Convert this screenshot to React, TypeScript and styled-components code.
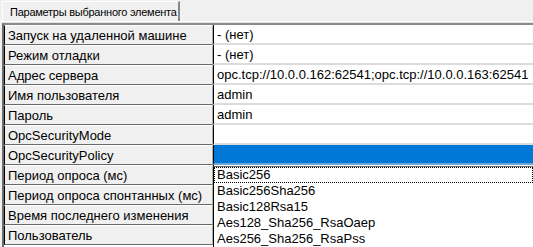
import React from "react";
import styled, { createGlobalStyle } from "styled-components";

const Global = createGlobalStyle`
  html, body { margin: 0; padding: 0; background: #f0f0f0; overflow: hidden; }
  body { font-family: "Liberation Sans", Arial, sans-serif; }
`;

const Page = styled.div`
  width: 533px;
  height: 247px;
  display: flex;
  flex-direction: column;
  position: relative;
  overflow: hidden;
  background: #f0f0f0;
`;

const TabStrip = styled.div`
  height: 22px;
  display: flex;
  align-items: flex-end;
  padding-left: 2px;
  border-bottom: 1px solid #ffffff;
  box-sizing: border-box;
`;

const Tab = styled.div`
  height: 20px;
  width: 178px;
  box-sizing: border-box;
  border-top: 1px solid #ffffff;
  border-left: 1px solid #ffffff;
  border-right: 2px solid #8a8a8a;
  display: flex;
  align-items: center;
  padding-left: 7px;
  font-size: 11px;
  color: #000;
  letter-spacing: -0.25px;
  white-space: nowrap;
  overflow: hidden;
`;

const Panel = styled.div`
  flex: 1;
  display: flex;
  flex-direction: column;
  border-top: 1px solid #e3e3e3;
  margin-left: 2px;
`;

const Grid = styled.div`
  flex: 1;
  display: grid;
  grid-template-columns: 209px 1fr;
  grid-auto-rows: 20px;
  border-top: 2px solid #8a8a8a;
  border-left: 2px solid #6b6b6b;
  background: #ffffff;
  align-content: start;
`;

const Label = styled.div`
  box-sizing: border-box;
  background: #f0f0f0;
  border-left: 1px solid #000;
  border-top: 1px solid #ffffff;
  border-bottom: 1px solid #696969;
  border-right: 1px solid #b0b0b0;
  display: flex;
  align-items: center;
  padding: 1px 0 0 3px;
  font-size: 13px;
  color: #000;
  white-space: nowrap;
  overflow: hidden;
`;

const Value = styled.div<{ $selected?: boolean }>`
  box-sizing: border-box;
  background: ${(p) => (p.$selected ? "#0078d7" : "#ffffff")};
  border-left: 1px solid #000;
  border-bottom: 2px solid ${(p) => (p.$selected ? "#6aa5d8" : "#dcdcdc")};
  display: flex;
  align-items: center;
  padding-left: 3px;
  font-size: 13px;
  color: ${(p) => (p.$selected ? "#fff" : "#000")};
  white-space: nowrap;
  overflow: hidden;
`;

const DropList = styled.div`
  position: absolute;
  left: 213px;
  top: 166px;
  right: 0;
  bottom: 0;
  background: #ffffff;
  border-left: 1px solid #000;
  border-top: 1px solid #646464;
  display: flex;
  flex-direction: column;
`;

const Item = styled.div<{ $focused?: boolean }>`
  height: 16px;
  box-sizing: border-box;
  display: flex;
  align-items: center;
  padding-left: 2px;
  font-size: 13px;
  line-height: 14px;
  color: #000;
  border: 1px dotted ${(p) => (p.$focused ? "#000" : "transparent")};
  white-space: nowrap;
`;

const rows: [string, string, boolean?][] = [
  ["Запуск на удаленной машине", "- (нет)"],
  ["Режим отладки", "- (нет)"],
  ["Адрес сервера", "opc.tcp://10.0.0.162:62541;opc.tcp://10.0.0.163:62541"],
  ["Имя пользователя", "admin"],
  ["Пароль", "admin"],
  ["OpcSecurityMode", ""],
  ["OpcSecurityPolicy", "", true],
  ["Период опроса (мс)", ""],
  ["Период опроса спонтанных  (мс)", ""],
  ["Время последнего изменения", ""],
  ["Пользователь", ""],
];

const items = [
  "Basic256",
  "Basic256Sha256",
  "Basic128Rsa15",
  "Aes128_Sha256_RsaOaep",
  "Aes256_Sha256_RsaPss",
];

export default function App() {
  return (
    <Page>
      <Global />
      <TabStrip>
        <Tab>Параметры выбранного элемента</Tab>
      </TabStrip>
      <Panel>
        <Grid>
          {rows.map(([l, v, s]) => (
            <React.Fragment key={l}>
              <Label>{l}</Label>
              <Value $selected={s}>{v}</Value>
            </React.Fragment>
          ))}
        </Grid>
      </Panel>
      <DropList>
        {items.map((it, i) => (
          <Item key={it} $focused={i === 0}>
            {it}
          </Item>
        ))}
      </DropList>
    </Page>
  );
}
